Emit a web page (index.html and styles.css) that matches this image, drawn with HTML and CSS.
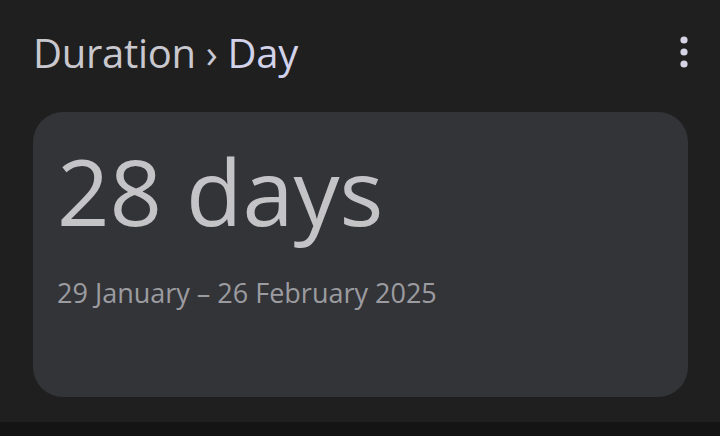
FILE: index.html
```html
<!DOCTYPE html>
<html>
<head>
<meta charset="utf-8">
<link rel="stylesheet" href="styles.css">
</head>
<body>
<div class="page">
  <header class="header">
    <h1 class="title"><span class="crumb">Duration</span> <span class="sep">›</span> <span class="current">Day</span></h1>
    <button class="menu" aria-label="More options">
      <svg width="8" height="32" viewBox="0 0 8 32"><circle cx="4" cy="4" r="3.6" fill="#d4d4e4"/><circle cx="4" cy="16" r="3.6" fill="#d4d4e4"/><circle cx="4" cy="28" r="3.6" fill="#d4d4e4"/></svg>
    </button>
  </header>
  <section class="card">
    <div class="value">28 days</div>
    <div class="range">29 January – 26 February 2025</div>
  </section>
</div>
<div class="bottom"></div>
</body>
</html>
```
FILE: styles.css
```css
html, body {
  margin: 0;
  padding: 0;
  background: #1f1f1f;
  height: 100%;
}
body {
  display: flex;
  flex-direction: column;
  font-family: "Open Sans", "Noto Sans", sans-serif;
}
.page {
  flex: 1;
  padding: 0 32px 0 33px;
}
.header {
  display: flex;
  align-items: center;
  justify-content: space-between;
  height: 112px;
  padding-bottom: 8px;
  box-sizing: border-box;
}
.title {
  margin: 0;
  font-weight: 400;
  font-size: 40px;
  letter-spacing: -0.3px;
  color: #c8c8ce;
  line-height: 1;
  margin-top: 2px;
}
.sep { color: #c8c8d4; }
.current { color: #d2d2ea; }
.menu {
  background: none;
  border: 0;
  padding: 0;
  width: 8px;
  height: 32px;
  display: flex;
  margin-top: 0;
}
.card {
  height: 285px;
  background: #333438;
  border-radius: 30px;
  padding: 0 24px;
  box-sizing: border-box;
}
.value {
  font-size: 92px;
  color: #c4c4c6;
  line-height: 1;
  padding-top: 33px;
}
.range {
  font-size: 27px;
  color: #9c9ca0;
  margin-top: 42px;
  line-height: 1;
}
.bottom {
  height: 14px;
  background: #141414;
}
```
